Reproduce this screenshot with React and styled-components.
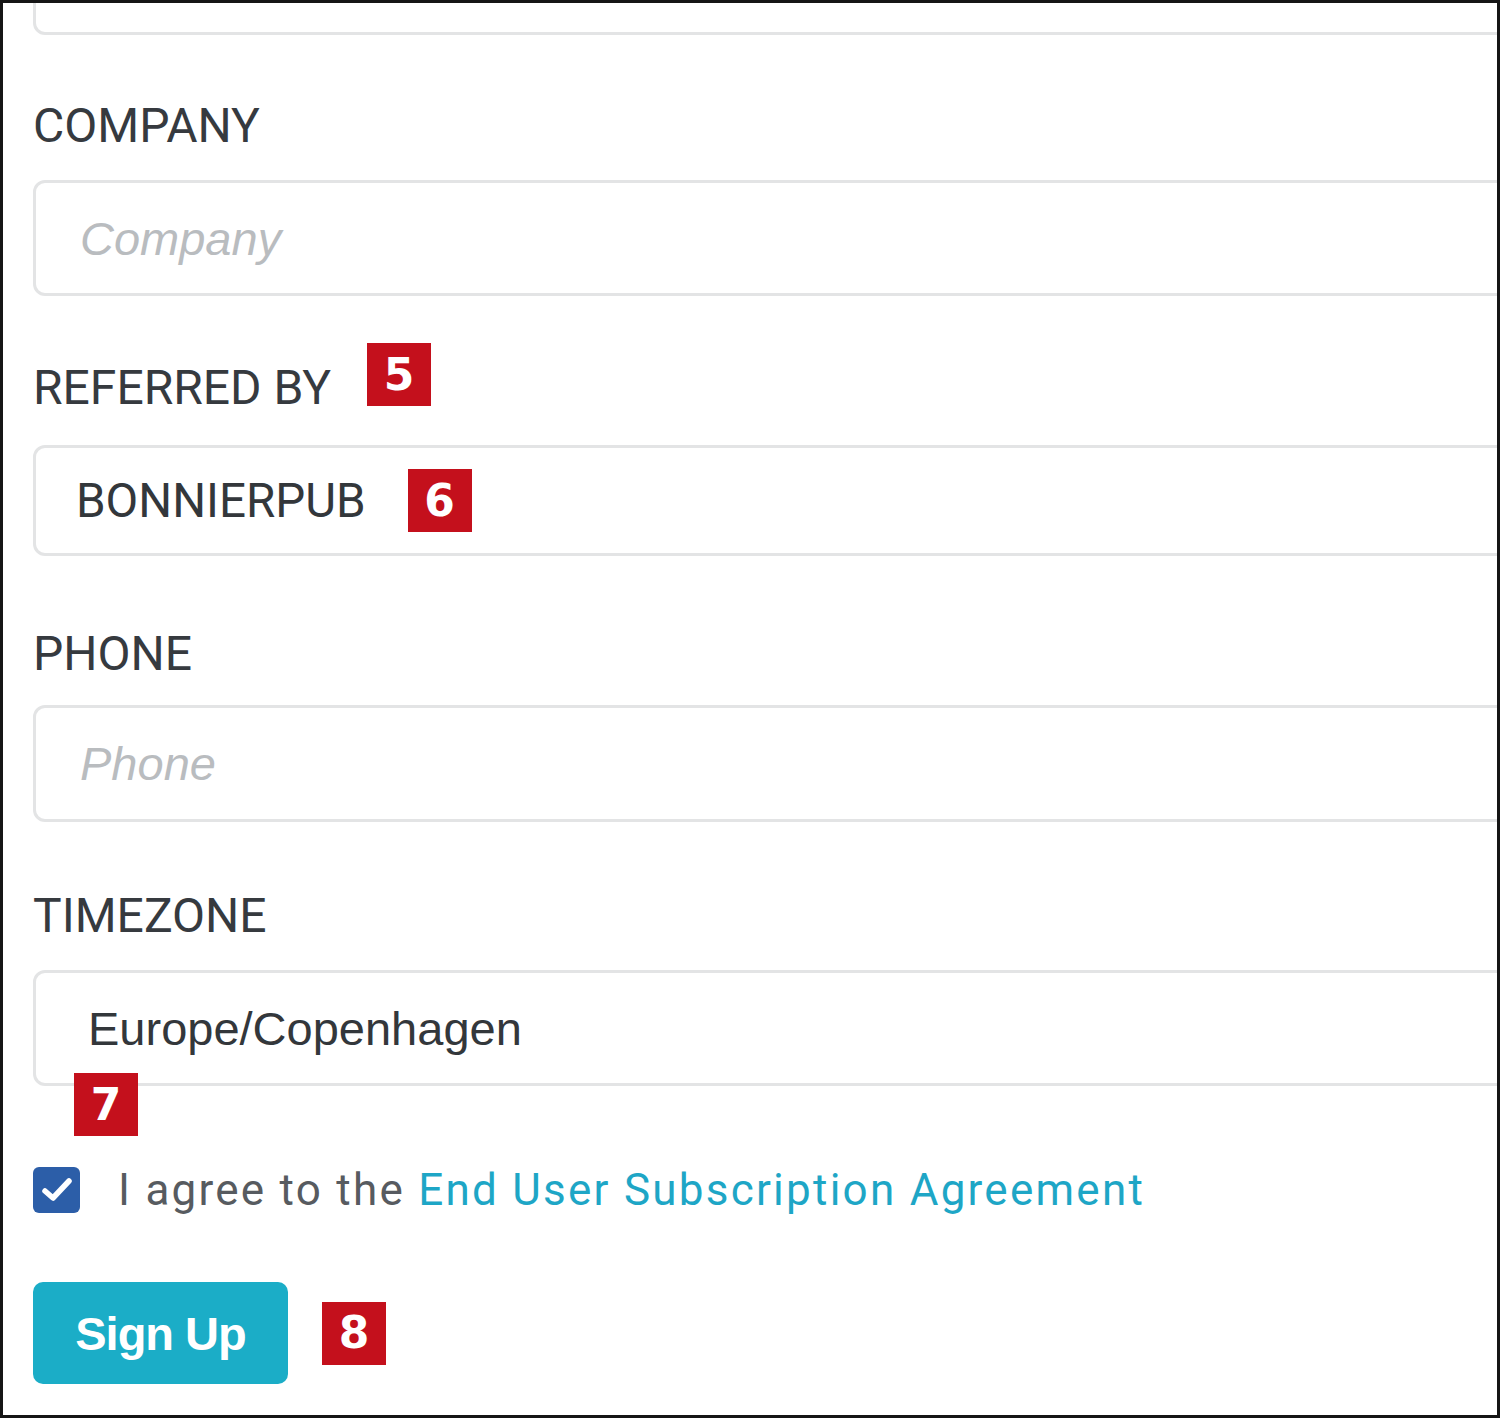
import React from 'react';
import styled, { createGlobalStyle } from 'styled-components';

const Global = createGlobalStyle`
  html, body { margin:0; padding:0; background:#fff; }
  * { box-sizing:border-box; }
`

const Frame = styled.div`
  width:1500px; height:1418px;
  border:3px solid #151515;
  overflow:hidden;
  background:#fff;
  padding-left:30px;
  display:flex; flex-direction:column;
`

const Label = styled.div`
  display:flex; align-items:flex-start; gap:36px;
  margin-top:${p => p.mt}px;
  height:56px; line-height:56px;
  font-family:Roboto, "Liberation Sans", sans-serif;
  font-size:48px; color:#363a3f;
  white-space:nowrap;
`

const Input = styled.div`
  flex:none;
  display:flex; align-items:center; gap:42px;
  width:1520px; height:${p => p.h || 116}px;
  margin-top:${p => p.mt}px;
  padding-left:${p => p.pl || 44}px;
  border:3px solid #e3e4e5; border-radius:12px;
  background:#fff;
  white-space:nowrap;
`

const Placeholder = styled.span`
  font-family:"Liberation Sans", Arial, sans-serif;
  font-style:italic; font-size:47px; color:#b9bcbf;
`

const Value = styled.span`
  font-family:${p => p.arial ? '"Liberation Sans", Arial' : 'Roboto, "Liberation Sans"'}, sans-serif;
  font-size:${p => p.arial ? 47 : 47.5}px; color:#33373b;
`

const Badge = styled.span`
  flex:none;
  display:inline-flex; align-items:center; justify-content:center;
  width:64px; height:63px;
  margin-top:${p => p.mt || 0}px;
  margin-left:${p => p.ml || 0}px;
  background:#c4101c; color:#fff;
  font-family:"DejaVu Sans", "Liberation Sans", sans-serif;
  font-weight:bold; font-size:44px; line-height:1;
`

const AgreeRow = styled.label`
  display:flex; align-items:center; gap:38px;
  margin-top:28px;
  font-family:Roboto, "Liberation Sans", sans-serif;
  font-size:44px; letter-spacing:2.25px; color:#575b60;
  white-space:nowrap;
  a { color:#1ea6c6; text-decoration:none; }
`

const Check = styled.span`
  flex:none;
  display:inline-flex; align-items:center; justify-content:center;
  width:47px; height:46px; border-radius:6px;
  background:#2c5ea8;
`

const ButtonRow = styled.div`
  display:flex; align-items:center; gap:34px;
  margin-top:66px;
`

const SignUp = styled.button`
  width:255px; height:102px;
  border:none; border-radius:10px;
  background:#1badc7; color:#fff;
  font-family:"Liberation Sans", Arial, sans-serif;
  font-weight:bold; font-size:47px; letter-spacing:-1px;
  padding:0;
`

const App = () => {
  return (
    <>
      <Global />
      <Frame>
        <Input mt={-84} />

        <Label mt={63}>COMPANY</Label>
        <Input mt={26}>
          <Placeholder>Company</Placeholder>
        </Input>

        <Label mt={64}>
          REFERRED BY
          <Badge mt={-17}>5</Badge>
        </Label>
        <Input mt={29} h={111} pl={40}>
          <Value>BONNIERPUB</Value>
          <Badge>6</Badge>
        </Input>

        <Label mt={70}>PHONE</Label>
        <Input mt={23} h={117}>
          <Placeholder>Phone</Placeholder>
        </Input>

        <Label mt={66}>TIMEZONE</Label>
        <Input mt={26} pl={52}>
          <Value arial>Europe/Copenhagen</Value>
        </Input>
        <Badge mt={-13} ml={41}>7</Badge>

        <AgreeRow>
          <Check>
            <svg width="32" height="28" viewBox="0 0 32 28">
              <path d="M4 15 L12 22 L28 5" fill="none" stroke="#fff" strokeWidth="5.5" strokeLinecap="round" strokeLinejoin="round" />
            </svg>
          </Check>
          <span>I agree to the <a href="#">End User Subscription Agreement</a></span>
        </AgreeRow>

        <ButtonRow>
          <SignUp>Sign Up</SignUp>
          <Badge>8</Badge>
        </ButtonRow>
      </Frame>
    </>
  );
};

export default App;
